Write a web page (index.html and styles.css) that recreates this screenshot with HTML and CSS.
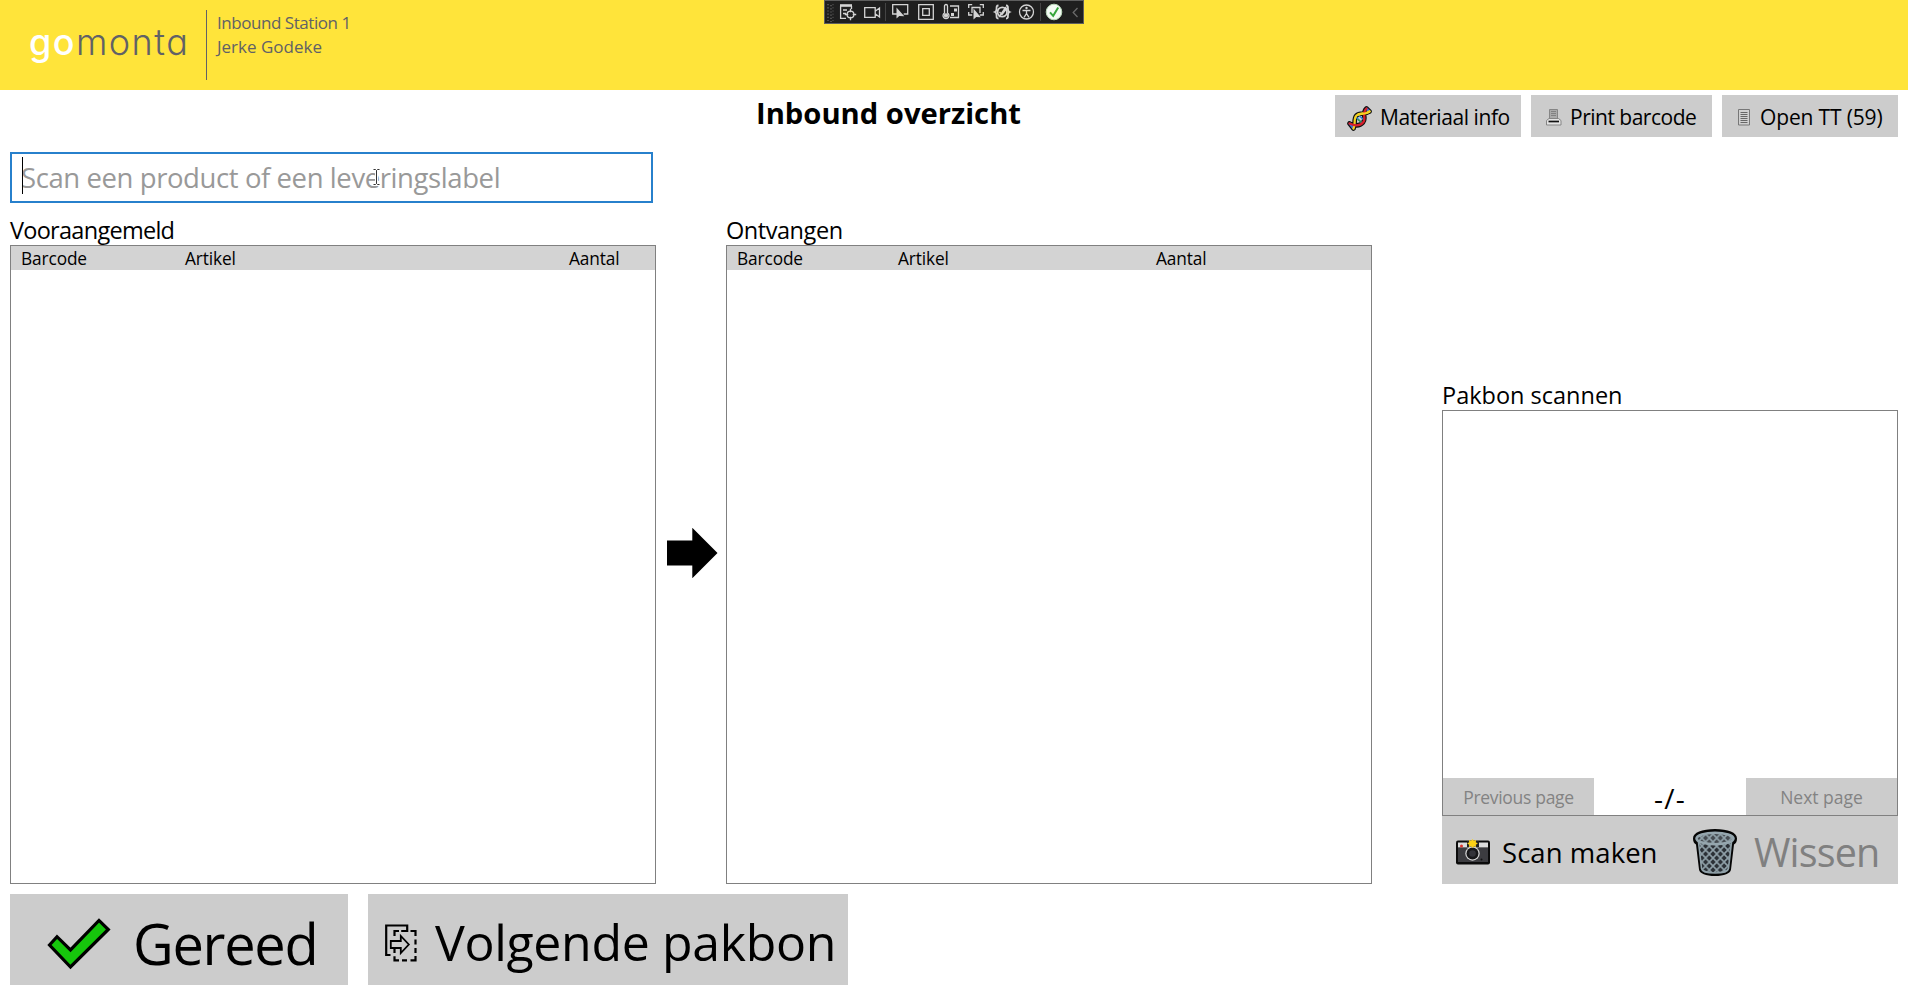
FILE: index.html
```
<!DOCTYPE html>
<html lang="nl">
<head>
<meta charset="utf-8">
<title>Inbound overzicht</title>
<link rel="stylesheet" href="styles.css">
</head>
<body>
<header class="topbar">
  <div class="logo"><span class="logo-go">go</span><span class="logo-monta">monta</span></div>
  <div class="user"><div class="station">Inbound Station 1</div><div>Jerke Godeke</div></div>
  <div class="devbar">
    <svg width="268" height="24" viewBox="0 0 268 24" fill="none" stroke="#d4d4d4" stroke-width="1.3">
      <rect x="0.5" y="0.5" width="259" height="23" fill="#1f1f1f" stroke="#5f5f5f" stroke-width="1"/>
      <path d="M4 4v17M7 5v17" stroke="#5a5a5a" stroke-width="1.6" stroke-dasharray="1.2 2"/>
      <path d="M9 4v17" stroke="#5a5a5a" stroke-width="1" stroke-dasharray="1.2 2"/>
      <path d="M16 5.500h12" stroke-width="2.600"/><path d="M16.600 6v12.400h5.400M27.500 6v3M19 10h4M19 13.500h3"/>
      <circle cx="26.500" cy="14.500" r="3.400"/><path d="M26.500 8.800v3.500M26.500 16.700v3.500M20.800 14.500h3.500M28.700 14.500h3.500"/>
      <path d="M40.700 7.700h10.500v9.600h-10.500zM51.500 11l4-3v9l-4-3"/>
      <path d="M61.500 3v18M216.500 3v18" stroke="#444" stroke-width="1"/>
      <path d="M73 14h-4.300v-9.300h15v9.300h-4"/><path d="M72.500 7.500v11l2.800-2.500 5 .3z" fill="#d4d4d4" stroke="none"/>
      <path d="M94.700 4.700h14.600v14.600h-14.600zM98.700 8.700h6.600v6.600h-6.600z"/>
      <path d="M120.500 13v-7a1.500 1.500 0 0 1 3 0v7a3 3 0 1 1-3 0z"/><circle cx="122" cy="15.500" r="1.500" fill="#d4d4d4"/><path d="M126 6h8.500v11.500h-8.500"/><path d="M130 8.500h3v3h-3zM127 13h3v3h-3z" fill="#d4d4d4" stroke="none"/>
      <path d="M144.700 8v-3.300h3.500M155.800 4.700h3.500v3.300M144.700 12v3h3.500M159.300 12v3h-3.500M148 13v-5.500h8v5.500"/><path d="M149.500 8.500v11l2.800-2.500 4.500.3z" fill="#d4d4d4" stroke="none"/>
      <path d="M174.500 5.500c-4 0 0 5-3.500 6.500 3.500 1.500-.5 6.500 3.500 6.500M182 5.500c4 0 0 5 3.500 6.500-3.500 1.500.5 6.500-3.500 6.500" stroke-width="1.800"/><circle cx="178.300" cy="12" r="4.700" stroke-width="1.800"/><path d="M175.500 12l2.500 2.500 5-6.500M175 17l7-10" stroke-width="1.400"/>
      <circle cx="202.500" cy="12" r="7"/><circle cx="202.500" cy="8" r="1.200" fill="#d4d4d4" stroke="none"/><path d="M198.500 10.500h8M202.500 10.500v3l-2.500 3.800M202.500 13.500l2.500 3.800"/>
      <circle cx="230" cy="12" r="7.800" fill="#f4fbf4" stroke="#b9d8b9" stroke-width="1"/><path d="M226 12.300l3.200 3.500 5-8.300" stroke="#37a63c" stroke-width="2"/>
      <path d="M253.500 8l-4.300 4.500 4.300 4.500" stroke="#6a6a6a"/>
    </svg>
  </div>
</header>

<main>
  <section class="titlerow">
    <h1>Inbound overzicht</h1>
    <nav>
      <button class="btn material">
        <svg width="26" height="26" viewBox="0 0 26 26" fill="none" stroke-linecap="round" stroke-linejoin="round">
          <path d="M2.500 18.500C8 21 13 21 16 17.500C20 13 14 9 19.500 3.500M6.500 23.500C9 20 6 14 9.500 10.500C13 7 18 10 22.500 6.500M2.500 18.500l4 5M19.500 3.500l3 3" stroke="#111" stroke-width="4.600"/>
          <path d="M3 18.800l3 4M19.800 3.800l2.500 2.500" stroke="#3f6fd0" stroke-width="2.600"/>
          <path d="M9.500 12.500l5 5M12 10.500l5 4.500" stroke="#2c7fd0" stroke-width="1.600"/>
          <path d="M11 14.500l3 2.500" stroke="#2e9c45" stroke-width="1.300"/>
          <path d="M6.500 23.500C9 20 6 14 9.500 10.500C13 7 18 10 22.500 6.500" stroke="#f5d21f" stroke-width="2.300"/>
          <path d="M2.500 18.500C8 21 13 21 16 17.500C20 13 14 9 19.500 3.500" stroke="#d6202c" stroke-width="2.300"/>
          <path d="M11.500 9.300C15 8.500 19 9.500 22.500 6.500" stroke="#f5d21f" stroke-width="2.300"/>
        </svg>
        <span>Materiaal info</span>
      </button>
      <button class="btn print">
        <svg width="16" height="17" viewBox="0 0 16 17">
          <path d="M3.500.5h8v9h-8z" fill="#aaa" stroke="#858585"/>
          <path d="M5 2.500h5M5 4.500h5M5 6.500h5" stroke="#777" stroke-width=".8"/>
          <path d="M3 9.500h9.500l2.500 2v4.500h-14.500v-4.500z" fill="#e4e4e4" stroke="#858585"/>
          <path d="M2.500 12.500h10.500" stroke="#111" stroke-width="1.700"/>
        </svg>
        <span>Print barcode</span>
      </button>
      <button class="btn open">
        <svg width="13" height="17" viewBox="0 0 13 17"><path d="M.5.5h11v15.500h-11z" fill="#d0d0d0" stroke="#777"/><path d="M2.500 3.500h7M2.500 5.500h7M2.500 7.500h7M2.500 9.500h7M2.500 11.500h7M2.500 13.500h7" stroke="#666" stroke-width="1"/></svg>
        <span>Open TT (59)</span>
      </button>
    </nav>
  </section>

  <div class="scan">Scan een product of een leveringslabel<i class="caret"></i>
    <svg class="ibeam" width="9" height="18" viewBox="0 0 9 18" fill="none"><path d="M1.500 1.500h2l1 1 1-1h2M4.500 2.500v13M1.500 16.500h2l1-1 1 1h2" stroke="#fff" stroke-width="3"/><path d="M1.500 1.500h2l1 1 1-1h2M4.500 2.500v13M1.500 16.500h2l1-1 1 1h2" stroke="#333"/></svg>
  </div>

  <section class="columns">
    <div class="column">
      <h2 class="tight">Vooraangemeld</h2>
      <div class="list"><div class="listhead first"><span>Barcode</span><span>Artikel</span><span>Aantal</span></div></div>
    </div>
    <div class="arrow"><svg width="51" height="52" viewBox="0 0 51 52"><path d="M0 13.500h25.300v-12.700l25.200 25.200-25.200 25.200v-12.700h-25.300z"/></svg></div>
    <div class="column">
      <h2 class="received">Ontvangen</h2>
      <div class="list"><div class="listhead second"><span>Barcode</span><span>Artikel</span><span>Aantal</span></div></div>
    </div>
    <div class="column slip">
      <h2>Pakbon scannen</h2>
      <div class="list preview">
        <div class="pager"><button class="page prev">Previous page</button><span class="count">-/-</span><button class="page">Next page</button></div>
      </div>
      <div class="slip-actions">
        <button class="make">
          <svg width="34" height="26" viewBox="0 0 34 26">
            <rect x="0" y="1.500" width="34" height="24" rx="2" fill="#0b0b0b"/>
            <path d="M2 3.500h30v5h-30z" fill="#dcdcdc"/><path d="M2 9h30v14h-30z" fill="#3c3c40"/><path d="M11 2h12v6h-12z" fill="#222"/>
            <circle cx="5.500" cy="7" r="1.500" fill="#e0352b"/>
            <circle cx="16.500" cy="14.500" r="7.200" fill="#d8d8d8"/><circle cx="16.500" cy="14.500" r="6" fill="#18181a"/><circle cx="16.500" cy="14.500" r="3.300" fill="#34343a"/>
            <circle cx="25.500" cy="20.500" r="1" fill="#111"/>
            <path d="M16.500 0l1.300 1.700 2.300-.7-.3 2.200 2 1.300-2 1.200.3 2.200-2.300-.6-1.300 1.700-1.300-1.700-2.300.6.300-2.200-2-1.200 2-1.300-.3-2.200 2.300.7z" fill="#fcd116"/>
          </svg>
          <span>Scan maken</span>
        </button>
        <button class="clear">
          <svg width="44" height="47" viewBox="0 0 44 47">
            <defs><pattern id="mesh" x="1.500" y="1" width="7.400" height="8" patternUnits="userSpaceOnUse"><path d="M0 0l7.400 8M7.400 0l-7.400 8" stroke="#8fa0a8" stroke-width="1.600"/></pattern></defs>
            <path d="M22 0c13 0 22 3.500 22 9.500 0 3-1 5-3 6l-3 25c-.5 4-7 6.500-16 6.500s-15.500-2.500-16-6.500l-3-25c-2-1-3-3-3-6 0-6 9-9.500 22-9.500z" fill="#050505"/>
            <path d="M5.500 13l3 26.500c1 6 26 6 27 0l3-26.500z" fill="#2b3036"/>
            <path d="M5.500 13l3 26.500c1 6 26 6 27 0l3-26.500z" fill="url(#mesh)" stroke="#8fa0a8" stroke-width="1.600"/>
            <ellipse cx="22" cy="9.500" rx="18.500" ry="5.800" fill="#464c52"/>
            <ellipse cx="22" cy="9.500" rx="18.500" ry="5.800" fill="url(#mesh)" stroke="#95a6ae" stroke-width="2.600"/>
          </svg>
          <span>Wissen</span>
        </button>
      </div>
    </div>
  </section>

  <section class="actions">
    <button class="big done">
      <svg width="64" height="52" viewBox="0 0 64 52"><path d="M2.500 27l7.500-8.300 13.500 13.200 28.500-29.500 9.300 9.100-37.800 37.500z" fill="#16c60c" stroke="#000" stroke-width="3.200"/></svg>
      <span>Gereed</span>
    </button>
    <button class="big next">
      <svg width="32" height="38" viewBox="0 0 32 38" fill="none" stroke="#000" stroke-width="2.200">
        <path d="M5.500 31h-4.300v-29.500h21v5.500h-6"/>
        <path d="M9.500 12v-5h4.500M25.500 7h5v5M30.500 15.500v5M30.500 24v5M30.500 32v4.300h-5M22 36.300h-5M14 36.300h-4.500v-4M9.500 29v-4.500"/>
        <path d="M5.800 17h10v-5l8 8.500-8 8.500v-5h-10z" stroke-width="1.800"/>
      </svg>
      <span>Volgende pakbon</span>
    </button>
  </section>
</main>
</body>
</html>
```
FILE: styles.css
```
* { box-sizing: border-box; }
body { margin: 0; width: 1908px; height: 995px; overflow: hidden; background: #fff; color: #000; font-family: "Open Sans", "Noto Sans", sans-serif; }
h1, h2 { margin: 0; }
button { border: 0; padding: 0; margin: 0; background: #ccc; color: #000; font-family: inherit; display: flex; white-space: nowrap; text-align: left; }
svg { display: block; flex: none; }

.topbar { position: relative; display: flex; height: 90px; background: #ffe43a; color: #616166; }
.logo { width: 206px; padding-left: 29px; font: 300 36px/85px Inter, sans-serif; letter-spacing: 1.450px; font-feature-settings: "cv11"; white-space: nowrap; }
.logo-go { color: #fff; font-weight: 500; }
.user { margin-top: 10px; height: 70px; padding: 1px 0 0 10px; border-left: 1px solid #616166; font-size: 17px; line-height: 24px; }
.station { letter-spacing: -.45px; }
.devbar { position: absolute; left: 824px; top: 0; }

main { padding: 2px 10px 0; }
.titlerow { display: flex; height: 60px; padding-left: 746px; justify-content: space-between; }
h1 { font-size: 29.200px; line-height: 42px; letter-spacing: 0; }
nav { display: flex; gap: 10px; padding-top: 3px; }
.btn { height: 42px; font-size: 21px; line-height: 45px; }
.btn.material { width: 186px; padding-left: 12px; letter-spacing: -.42px; gap: 7px; }
.material svg { margin-top: 10px; }
.btn.print { width: 181px; padding-left: 15px; letter-spacing: -.5px; gap: 8px; }
.print svg, .open svg { margin-top: 14px; }
.btn.open { width: 176px; padding-left: 16px; gap: 9px; letter-spacing: -.15px; }

.scan { position: relative; width: 643px; height: 51px; border: 2px solid #2780cc; padding-left: 9px; color: #999; font-size: 27.500px; line-height: 48px; letter-spacing: -.41px; white-space: nowrap; }
.caret { position: absolute; left: 10px; top: 3px; width: 1px; height: 37px; background: #000; }
.ibeam { position: absolute; left: 360px; top: 14px; }

.columns { display: grid; grid-template-columns: 646px 70px 646px 456px; height: 681px; padding-top: 11px; }
.columns > .slip { margin-left: 70px; width: 456px; }
.column { display: flex; flex-direction: column; }
h2 { font-size: 23.500px; font-weight: 400; line-height: 33px; height: 31px; flex: none; }
h2.tight { letter-spacing: -.72px; }
h2.received { letter-spacing: -.45px; }
.list { flex: 1; border: 1px solid #808080; }
.listhead { display: grid; height: 24px; padding-left: 10px; background: #d3d3d3; font-size: 17.300px; line-height: 26px; letter-spacing: -.12px; }
.first { grid-template-columns: 164px 384px auto; }
.second { grid-template-columns: 161px 258px auto; }
.arrow { padding: 313px 0 0 11px; }

.slip { padding-top: 165px; }
.preview { display: flex; align-items: flex-end; }
.pager { display: flex; width: 100%; height: 37px; }
.page { width: 151px; color: #838383; font-size: 17.500px; line-height: 39px; justify-content: center; }
.prev { letter-spacing: -.3px; }
.count { flex: 1; text-align: center; font-size: 28px; line-height: 41px; letter-spacing: 1.300px; }
.slip-actions { display: flex; height: 68px; flex: none; background: #ccc; }
.make { width: 239px; padding-left: 14px; gap: 12px; font-size: 27.500px; line-height: 73px; letter-spacing: .05px; }
.make svg { margin-top: 23px; }
.clear { padding-left: 12px; gap: 17px; color: #808080; font-size: 39.500px; line-height: 73px; letter-spacing: -.85px; }
.clear svg { margin-top: 13px; }

.actions { display: flex; gap: 20px; padding-top: 10px; }
.big { height: 91px; }
.done { width: 338px; padding-left: 37px; gap: 22px; font-size: 56px; line-height: 98px; letter-spacing: -1.300px; }
.done svg { margin-top: 24px; }
.next { width: 480px; padding-left: 17px; gap: 18px; font-size: 50px; line-height: 97px; letter-spacing: -.330px; }
.next svg { margin-top: 30px; }
```
